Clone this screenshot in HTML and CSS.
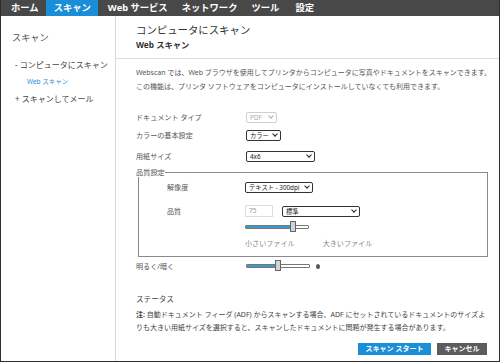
FILE: index.html
```html
<!DOCTYPE html>
<html lang="ja">
<head>
<meta charset="utf-8">
<link rel="stylesheet" href="styles.css">
</head>
<body>
<div class="frame">
  <nav class="topnav">
    <span class="nav-item">ホーム</span>
    <span class="nav-item active">スキャン</span>
    <span class="nav-item">Web サービス</span>
    <span class="nav-item">ネットワーク</span>
    <span class="nav-item">ツール</span>
    <span class="nav-item">設定</span>
  </nav>
  <div class="body-row">
    <aside class="sidebar">
      <div class="side-title">スキャン</div>
      <div class="side-item">- コンピュータにスキャン</div>
      <div class="side-sub">Web スキャン</div>
      <div class="side-item">+ スキャンしてメール</div>
    </aside>
    <main class="main">
      <header class="page-head">
        <h1 class="page-title">コンピュータにスキャン</h1>
        <h2 class="page-sub">Web スキャン</h2>
      </header>
      <div class="content">
        <p class="desc">Webscan では、Web ブラウザを使用してプリンタからコンピュータに写真やドキュメントをスキャンできます。<br>この機能は、プリンタ ソフトウェアをコンピュータにインストールしていなくても利用できます。</p>

        <div class="row r1">
          <span class="label">ドキュメント タイプ</span>
          <span class="select disabled w-pdf">PDF<span class="chev"></span></span>
        </div>
        <div class="row r2">
          <span class="label">カラーの基本設定</span>
          <span class="select w-color">カラー<span class="chev"></span></span>
        </div>
        <div class="row r3">
          <span class="label">用紙サイズ</span>
          <span class="select w-size">4x6<span class="chev"></span></span>
        </div>

        <fieldset class="quality">
          <legend class="legend">品質設定</legend>
          <div class="row q1">
            <span class="label inner">解像度</span>
            <span class="select w-res">テキスト - 300dpi<span class="chev"></span></span>
          </div>
          <div class="row q2">
            <span class="label inner">品質</span>
            <span class="textbox">75</span>
            <span class="select w-q">標準<span class="chev"></span></span>
          </div>
          <div class="row q3">
            <span class="label inner"></span>
            <span class="slider s1"><span class="fill"></span><span class="thumb"></span></span>
          </div>
          <div class="row q4">
            <span class="label inner"></span>
            <span class="hint">小さいファイル</span>
            <span class="hint hint2">大きいファイル</span>
          </div>
        </fieldset>

        <div class="row r4">
          <span class="label">明るく/暗く</span>
          <span class="slider s2"><span class="fill"></span><span class="thumb"></span></span>
          <span class="dot"></span>
        </div>

        <div class="status">ステータス</div>
        <p class="note"><b>注:</b> 自動ドキュメント フィーダ (ADF) からスキャンする場合、ADF にセットされているドキュメントのサイズよりも大きい用紙サイズを選択すると、スキャンしたドキュメントに問題が発生する場合があります。</p>

        <div class="actions">
          <span class="btn primary">スキャン スタート</span>
          <span class="btn secondary">キャンセル</span>
        </div>
      </div>
    </main>
  </div>
</div>
</body>
</html>
```
FILE: styles.css
```css
* { box-sizing: border-box; }
html, body { margin: 0; padding: 0; background: #fff; }
body {
  font-family: "Noto Sans", "Noto Sans CJK JP", sans-serif;
  color: #444;
}
.frame {
  width: 500px;
  height: 362px;
  border: 1px solid #2e2e2e;
  border-top: none;
  display: flex;
  flex-direction: column;
  overflow: hidden;
}
.topnav {
  height: 16px;
  background: #484848;
  display: flex;
  align-items: stretch;
  padding-left: 4px;
  margin: 0 -1px;
}
.nav-item {
  color: #fff;
  font-weight: bold;
  font-size: 9.3px;
  line-height: 16px;
  padding: 0 7px;
  white-space: nowrap;
}
.nav-item:nth-child(2) { padding: 0 7px 0 8px; }
.nav-item:nth-child(3) { padding-left: 10px; }
.nav-item:nth-child(6) { padding-left: 9px; }
.nav-item.active { background: #1a8ed6; }
.body-row { flex: 1; display: flex; min-height: 0; }
.sidebar {
  width: 115px;
  flex: none;
  border-right: 1px solid #d8d8d8;
  padding: 15px 0 0 11px;
}
.side-title { font-size: 9.2px; line-height: 14px; color: #555; }
.side-item { font-size: 8px; line-height: 14px; color: #444; margin-top: 13px; padding-left: 3px; white-space: nowrap; }
.side-sub { font-size: 6.5px; line-height: 12px; color: #2a8fd0; padding-left: 15px; margin-top: 4px; }
.side-sub + .side-item { margin-top: 4px; }
.main { flex: 1; min-width: 0; display: flex; flex-direction: column; }
.page-head {
  border-bottom: 1px solid #dcdcdc;
  padding: 7px 0 5px 20px;
  height: 43px;
}
.page-title { margin: 0; font-size: 10.4px; line-height: 14px; font-weight: normal; color: #333; }
.page-sub { margin: 2px 0 0; font-size: 8.3px; line-height: 12px; font-weight: bold; color: #333; }
.content { padding: 0 12px 0 20px; }
.desc { margin: 7px 0 0; font-size: 7px; line-height: 14px; color: #555; white-space: nowrap; }
.row { display: flex; align-items: center; height: 12px; }
.label { width: 110px; flex: none; font-size: 7.1px; color: #555; white-space: nowrap; }
.label.inner { width: 108px; padding-left: 28px; }
.r1 { margin-top: 17px; }
.r2 { margin-top: 6px; }
.r3 { margin-top: 9px; }
.select {
  position: relative;
  height: 11px;
  border: 1px solid #333;
  border-radius: 2px;
  font-size: 6.3px;
  line-height: 9px;
  padding-left: 3px;
  color: #222;
  background: #fff;
  white-space: nowrap;
  overflow: hidden;
}
.select.disabled { border-color: #cfcfcf; color: #aaa; }
.chev {
  position: absolute;
  right: 3px;
  top: 1px;
  width: 4px;
  height: 4px;
  border-right: 1.5px solid #222;
  border-bottom: 1.5px solid #222;
  transform: rotate(45deg);
}
.disabled .chev { border-color: #aaa; }
.w-pdf { width: 31px; }
.w-color { width: 35px; }
.w-size { width: 69px; }
.w-res { width: 68px; padding-right: 9px; }
.w-q { width: 78px; margin-left: 9px; }
.quality {
  margin: 5px 0 0 2px;
  width: 350px;
  border: 1px solid #8a8a8a;
  padding: 0 0 7px 0;
}
.legend { font-size: 7.2px; color: #555; padding: 0; margin-left: -3px; line-height: 10px; }
.quality .label { width: 106px; }
.q1 { margin-top: 4px; }
.q2 { margin-top: 12px; }
.q3 { margin-top: 4px; }
.q4 { margin-top: 4px; }
.textbox {
  width: 28px;
  height: 12px;
  border: 1px solid #ddd;
  font-size: 6.5px;
  line-height: 10px;
  color: #999;
  padding-left: 3px;
}
.slider {
  position: relative;
  width: 64px;
  height: 4px;
  border: 1px solid #777;
  background: #fff;
  border-radius: 1px;
}
.fill { display: block; height: 100%; background: #3a9bd2; }
.s1 .fill { width: 72%; }
.s2 .fill { width: 48%; }
.thumb {
  position: absolute;
  top: -5px;
  width: 6px;
  height: 11px;
  background: #d4d4d4;
  border: 1px solid #666;
}
.s1 .thumb { left: 44px; }
.s2 .thumb { left: 28px; }
.dot { width: 4px; height: 5px; border-radius: 50%; background: #555; margin-left: 6px; }
.hint { font-size: 7.1px; color: #888; white-space: nowrap; }
.hint2 { margin-left: 28px; }
.r4 { margin-top: 3px; }
.status { margin-top: 21px; font-size: 7.6px; line-height: 12px; color: #444; }
.note { margin: 3px 0 0; font-size: 7px; line-height: 13px; color: #444; padding-right: 0; }
.note b { font-weight: bold; }
.actions { display: flex; justify-content: flex-end; gap: 6px; margin-top: 9px; }
.btn { height: 12px; font-size: 7px; line-height: 12px; color: #fff; font-weight: bold; text-align: center; }
.btn.primary { background: #1a8ed6; width: 73px; }
.btn.secondary { background: #5c5c5c; width: 50px; }
```
